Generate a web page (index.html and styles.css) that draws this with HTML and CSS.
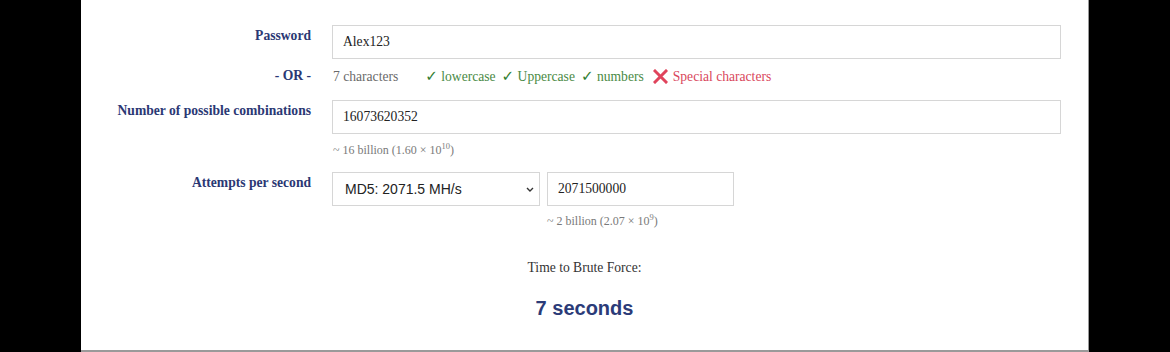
FILE: index.html
```html
<!DOCTYPE html>
<html lang="en">
<head>
    <meta charset="UTF-8">
    <title>Brute Force Calculator</title>
    <link rel="stylesheet" href="styles.css">
</head>
<body>
    <div class="panel">
        <div class="row">
            <label class="label" for="password">Password</label>
            <div class="field">
                <input type="text" id="password" class="text-input" value="Alex123">
            </div>
        </div>

        <div class="row row-or">
            <div class="label">- OR -</div>
            <div class="field charset">
                <span class="char-count">7 characters</span>
                <span class="ok"><span class="tick">&#10003;</span> lowercase</span>
                <span class="ok"><span class="tick">&#10003;</span> Uppercase</span>
                <span class="ok"><span class="tick">&#10003;</span> numbers</span>
                <span class="bad">
                    <svg class="cross" width="15" height="15" viewBox="0 0 15 15">
                        <path d="M2 2 L13 13 M13 2 L2 13" stroke="#e0445c" stroke-width="3" stroke-linecap="square" fill="none"/>
                    </svg>
                    Special characters
                </span>
            </div>
        </div>

        <div class="row row-combos">
            <label class="label" for="combos">Number of possible combinations</label>
            <div class="field">
                <input type="text" id="combos" class="text-input" value="16073620352">
                <div class="hint">~ 16 billion (1.60 &times; 10<sup>10</sup>)</div>
            </div>
        </div>

        <div class="row row-attempts">
            <label class="label" for="algo">Attempts per second</label>
            <div class="field attempts">
                <div class="select-wrap">
                    <select id="algo" class="algo">
                        <option>MD5: 2071.5 MH/s</option>
                    </select>
                    <svg class="chevron" width="8" height="5" viewBox="0 0 8 5">
                        <path d="M1 1 L4 4 L7 1" stroke="#333" stroke-width="1.4" fill="none"/>
                    </svg>
                </div>
                <div class="rate">
                    <input type="text" class="text-input rate-input" value="2071500000">
                    <div class="hint">~ 2 billion (2.07 &times; 10<sup>9</sup>)</div>
                </div>
            </div>
        </div>

        <div class="result">
            <div class="result-title">Time to Brute Force:</div>
            <div class="result-value">7 seconds</div>
        </div>
    </div>
</body>
</html>
```

FILE: styles.css
```css
body {
    margin: 0;
    background-color: #000;
    font-family: "Liberation Serif", "Times New Roman", serif;
    font-size: 13.6px;
}

.panel {
    margin-left: 81px;
    width: 1007px;
    height: 325px;
    background: #fff;
    border-right: 1px solid #9a9a9a;
    border-bottom: 2px solid #9a9a9a;
    padding-top: 25px;
}

.row {
    display: grid;
    grid-template-columns: 230px 729px;
    column-gap: 21px;
}

.label {
    text-align: right;
    font-weight: bold;
    color: #2b3874;
    line-height: 16px;
    padding-top: 3px;
}

.text-input {
    display: block;
    width: 100%;
    height: 34px;
    box-sizing: border-box;
    border: 1px solid #d6d6d6;
    padding: 0 10px;
    font-family: "Liberation Serif", "Times New Roman", serif;
    font-size: 13.6px;
    color: #222;
    background: #fff;
    outline: none;
}

.row-or {
    margin-top: 7px;
    line-height: 20px;
}

.row-or .label {
    padding-top: 0;
    line-height: 20px;
}

.charset {
    display: flex;
    align-items: center;
    padding-left: 1px;
}

.char-count {
    color: #6a6a6a;
    margin-right: 27px;
}

.ok {
    color: #4a8a45;
    margin-right: 6px;
}

.tick {
    font-family: "DejaVu Sans", sans-serif;
    font-weight: bold;
    font-size: 15px;
    color: #2f7d2f;
}

.bad {
    display: flex;
    align-items: center;
    color: #d9475c;
    margin-left: 3px;
}

.cross {
    margin-right: 5px;
}

.row-combos {
    margin-top: 13px;
}

.hint {
    margin-top: 9px;
    font-size: 12px;
    line-height: 14px;
    color: #7a7a7a;
    padding-left: 1px;
}

.hint sup {
    font-size: 8.5px;
    line-height: 0;
}

.row-attempts {
    margin-top: 15px;
}

.attempts {
    display: flex;
    gap: 7px;
    align-items: flex-start;
}

.select-wrap {
    position: relative;
    width: 208px;
}

.algo {
    appearance: none;
    -webkit-appearance: none;
    display: block;
    width: 100%;
    height: 34px;
    border: 1px solid #d6d6d6;
    border-radius: 0;
    background: #fff;
    padding: 0 12px;
    font-family: "Liberation Sans", Arial, sans-serif;
    font-size: 14px;
    color: #222;
}

.chevron {
    position: absolute;
    right: 6px;
    top: 15px;
    pointer-events: none;
}

.rate {
    width: 187px;
}

.rate .hint {
    margin-top: 8px;
    padding-left: 0;
}

.result {
    text-align: center;
    margin-top: 30px;
}

.result-title {
    color: #333;
    line-height: 20px;
}

.result-value {
    margin-top: 18px;
    font-family: "Liberation Sans", Arial, sans-serif;
    font-weight: bold;
    font-size: 20px;
    line-height: 24px;
    color: #2b3b78;
}
```
